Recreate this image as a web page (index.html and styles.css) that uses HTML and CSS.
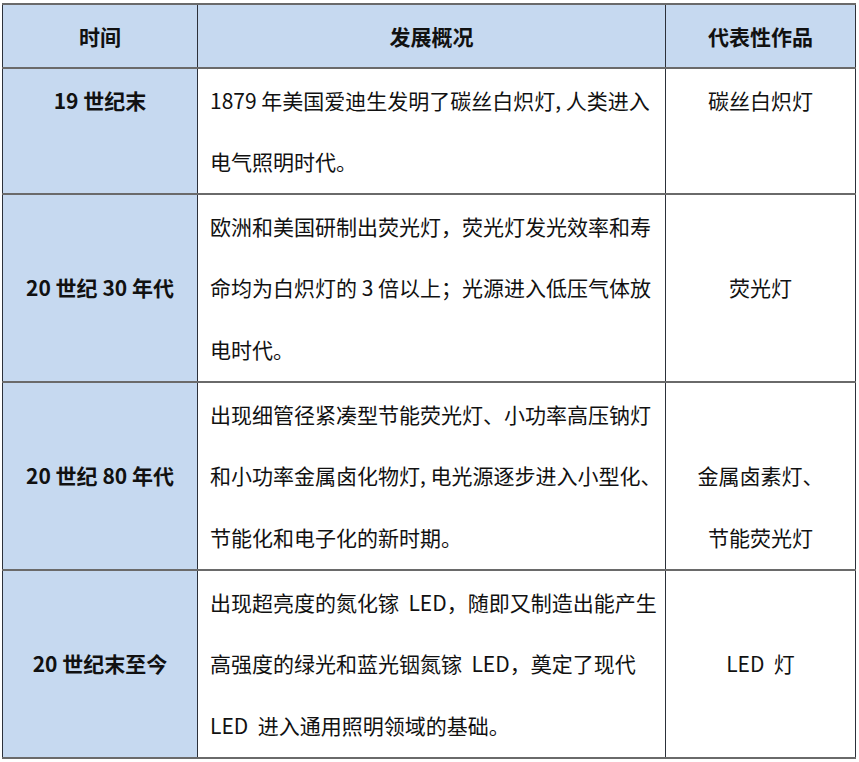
FILE: index.html
```html
<!DOCTYPE html>
<html lang="zh-CN">
<head>
<meta charset="utf-8">
<title>照明发展</title>
<link rel="stylesheet" href="styles.css">
</head>
<body>
<table class="history">
  <colgroup>
    <col class="col-time">
    <col class="col-desc">
    <col class="col-work">
  </colgroup>
  <thead>
    <tr class="head-row">
      <th>时间</th>
      <th>发展概况</th>
      <th>代表性作品</th>
    </tr>
  </thead>
  <tbody>
    <tr class="row-2">
      <td class="time top">19 世纪末</td>
      <td class="desc">1879 年美国爱迪生发明了碳丝白炽灯, 人类进入<br>电气照明时代。</td>
      <td class="work top">碳丝白炽灯</td>
    </tr>
    <tr class="row-3">
      <td class="time">20 世纪 30 年代</td>
      <td class="desc">欧洲和美国研制出荧光灯，荧光灯发光效率和寿<br>命均为白炽灯的 3 倍以上；光源进入低压气体放<br>电时代。</td>
      <td class="work">荧光灯</td>
    </tr>
    <tr class="row-3">
      <td class="time">20 世纪 80 年代</td>
      <td class="desc">出现细管径紧凑型节能荧光灯、小功率高压钠灯<br>和小功率金属卤化物灯, 电光源逐步进入小型化、<br>节能化和电子化的新时期。</td>
      <td class="work top"><br>金属卤素灯、<br>节能荧光灯</td>
    </tr>
    <tr class="row-3">
      <td class="time">20 世纪末至今</td>
      <td class="desc">出现超亮度的氮化镓&nbsp; LED，随即又制造出能产生<br>高强度的绿光和蓝光铟氮镓&nbsp; LED，奠定了现代<br>LED&nbsp; 进入通用照明领域的基础。</td>
      <td class="work">LED&nbsp; 灯</td>
    </tr>
  </tbody>
</table>
</body>
</html>
```

FILE: styles.css
```css
html, body {
  margin: 0;
  padding: 0;
  background: #ffffff;
}

body {
  padding: 3px 0 0 2px;
  font-family: "Noto Sans CJK SC", "Noto Sans", sans-serif;
  color: #111111;
}

.history {
  border-collapse: collapse;
  table-layout: fixed;
  width: 853px;
}

.col-time { width: 195px; }
.col-desc { width: 468px; }
.col-work { width: 190px; }

.history th,
.history td {
  border-left: 1px solid #2c313a;
  border-right: 1px solid #2c313a;
  border-top: 2px solid #6a6a6a;
  border-bottom: 2px solid #6a6a6a;
  padding: 0 12px;
  white-space: nowrap;
  box-sizing: border-box;
}

.head-row {
  height: 64px;
  background: #c6d9f0;
}

.head-row th {
  font-size: 21px;
  font-weight: 700;
  text-align: center;
  vertical-align: middle;
}

.row-2 { height: 126px; }
.row-3 { height: 188px; }

.history td {
  font-size: 21px;
  line-height: 61.3px;
  vertical-align: middle;
}

.history td.top {
  vertical-align: top;
  padding-top: 1px;
}

.time {
  background: #c6d9f0;
  font-weight: 700;
  text-align: center;
}

.desc {
  text-align: left;
}

.work {
  text-align: center;
}
```
